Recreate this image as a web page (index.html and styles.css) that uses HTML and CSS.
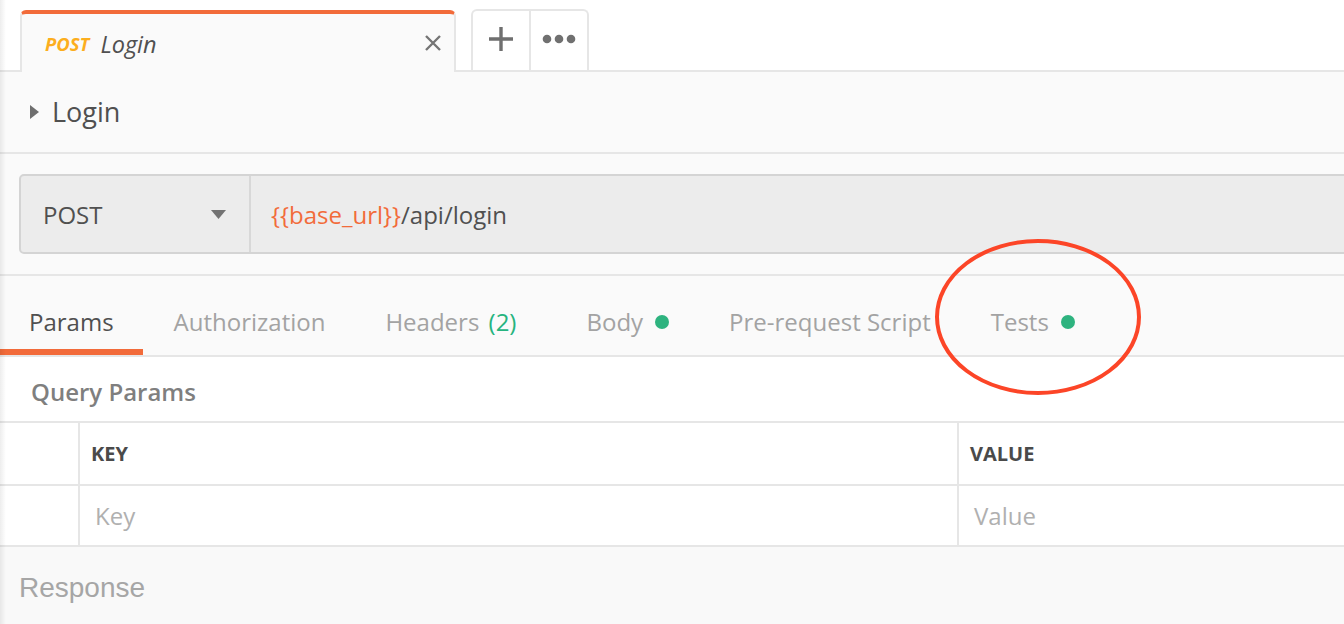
FILE: index.html
```html
<!DOCTYPE html>
<html>
<head>
<meta charset="utf-8">
<link rel="stylesheet" href="styles.css">
</head>
<body>
<div class="app">
  <div class="tabbar">
    <div class="tab active">
      <span class="tab-method">POST</span>
      <span class="tab-name">Login</span>
      <svg class="tab-close" width="18" height="18" viewBox="0 0 18 18"><path d="M2 2L16 16M16 2L2 16" stroke="#757575" stroke-width="2.4" fill="none"/></svg>
    </div>
    <div class="tab-actions">
      <div class="tab-btn"><svg width="26" height="26" viewBox="0 0 26 26"><path d="M13 1V25M1 13H25" stroke="#6f6f6f" stroke-width="3.4" fill="none"/></svg></div>
      <div class="tab-btn"><svg width="34" height="10" viewBox="0 0 34 10"><circle cx="5" cy="5" r="4.3" fill="#707070"/><circle cx="17" cy="5" r="4.3" fill="#707070"/><circle cx="29" cy="5" r="4.3" fill="#707070"/></svg></div>
    </div>
  </div>

  <div class="title-row">
    <svg class="caret-right" width="9" height="14" viewBox="0 0 9 14"><path d="M0 0L9 7L0 14Z" fill="#6e6e6e"/></svg>
    <span class="title">Login</span>
  </div>

  <div class="request-row">
    <div class="url-box">
      <div class="method">
        <span>POST</span>
        <svg width="15" height="9" viewBox="0 0 15 9"><path d="M0 0H15L7.5 9Z" fill="#737373"/></svg>
      </div>
      <div class="url"><span class="var">{{base_url}}</span>/api/login</div>
    </div>
  </div>

  <div class="req-tabs">
    <div class="req-tab selected">Params</div>
    <div class="req-tab">Authorization</div>
    <div class="req-tab">Headers <span class="count">(2)</span></div>
    <div class="req-tab">Body<span class="dot"></span></div>
    <div class="req-tab">Pre-request Script</div>
    <div class="req-tab">Tests<span class="dot"></span></div>
  </div>

  <div class="query-label">Query Params</div>

  <div class="kv-table">
    <div class="kv-row head">
      <div class="cell check"></div>
      <div class="cell key">KEY</div>
      <div class="cell value">VALUE</div>
    </div>
    <div class="kv-row">
      <div class="cell check"></div>
      <div class="cell key placeholder">Key</div>
      <div class="cell value placeholder">Value</div>
    </div>
  </div>

  <div class="response">Response</div>

  <svg class="annotation" width="220" height="170" viewBox="0 0 220 170"><ellipse cx="110" cy="85" rx="101" ry="76" fill="none" stroke="#fc4527" stroke-width="4"/></svg>
</div>
</body>
</html>
```

FILE: styles.css
```css
html, body {
  margin: 0;
  padding: 0;
  overflow: hidden;
}
body {
  font-family: "Open Sans", "Noto Sans", sans-serif;
  background: #fafafa;
  color: #505050;
}
.app {
  position: relative;
  width: 1344px;
  height: 624px;
  overflow: hidden;
}
.app::before {
  content: "";
  position: absolute;
  left: 0;
  top: 0;
  bottom: 0;
  width: 6px;
  background: linear-gradient(to right, rgba(0,0,0,0.07), rgba(0,0,0,0));
  z-index: 5;
  pointer-events: none;
}

/* Tab bar */
.tabbar {
  height: 70px;
  background: #fff;
  border-bottom: 2px solid #e6e6e6;
  display: flex;
  align-items: flex-end;
  padding-left: 20px;
}
.tab.active {
  box-sizing: border-box;
  width: 436px;
  height: 62px;
  margin-bottom: -2px;
  background: #fafafa;
  border-top: 4px solid #f26b3a;
  border-left: 2px solid #e6e6e6;
  border-right: 2px solid #e6e6e6;
  border-radius: 6px 6px 0 0;
  display: flex;
  align-items: center;
  padding: 0 12px 0 23px;
}
.tab-method {
  font-style: italic;
  font-weight: 700;
  font-size: 18.5px;
  color: #fcae1e;
  margin-right: 11px;
  margin-top: 1px;
}
.tab-name {
  font-style: italic;
  font-size: 23.5px;
  color: #505050;
  margin-top: 1px;
}
.tab-close {
  margin-left: auto;
  margin-top: 0;
}
.tab-actions {
  margin-left: 15px;
  height: 59px;
  display: flex;
  border: 2px solid #e6e6e6;
  border-bottom: none;
  border-radius: 6px 6px 0 0;
  background: #fff;
}
.tab-btn {
  width: 56px;
  display: flex;
  align-items: center;
  justify-content: center;
  padding-bottom: 3px;
}
.tab-btn + .tab-btn {
  border-left: 2px solid #e6e6e6;
}

/* Title */
.title-row {
  height: 80px;
  border-bottom: 2px solid #e6e6e6;
  display: flex;
  align-items: center;
  padding-left: 30px;
  gap: 13px;
}
.title {
  font-size: 27px;
  color: #505050;
  margin-top: -1px;
}

/* Request */
.request-row {
  height: 120px;
  border-bottom: 2px solid #e6e6e6;
  display: flex;
  align-items: center;
  padding-left: 19px;
}
.url-box {
  flex: 1;
  margin-right: -20px;
  height: 76px;
  background: #ececec;
  border: 2px solid #d4d4d4;
  border-radius: 5px;
  display: flex;
}
.method {
  width: 230px;
  box-sizing: border-box;
  border-right: 2px solid #d8d8d8;
  display: flex;
  align-items: center;
  justify-content: space-between;
  padding: 0 23px 0 22px;
  font-size: 24px;
  color: #505050;
}
.url {
  display: flex;
  align-items: center;
  padding-left: 20px;
  font-size: 24px;
  color: #505050;
}
.url .var {
  color: #f26b3a;
}

/* Request tabs */
.req-tabs {
  height: 79px;
  border-bottom: 2px solid #e6e6e6;
  display: flex;
  align-items: stretch;
}
.req-tab {
  display: flex;
  align-items: center;
  padding: 18px 29px 0 29px;
  margin-right: 2px;
  font-size: 24px;
  color: #a3a3a3;
  box-sizing: border-box;
  border-bottom: 6px solid transparent;
  white-space: pre;
}
.req-tab.selected {
  color: #505050;
  border-bottom-color: #f26b3a;
}
.req-tab .count {
  color: #26b47f;
  margin-left: 3px;
  margin-right: 10px;
}
.req-tab .dot {
  display: inline-block;
  width: 14px;
  height: 14px;
  border-radius: 50%;
  background: #2eb37f;
  margin-left: 12px;
}

/* Query params */
.query-label {
  height: 64px;
  background: #fff;
  display: flex;
  align-items: center;
  padding-left: 31px;
  padding-top: 4px;
  font-size: 24px;
  font-weight: 600;
  color: #7f7f7f;
  box-sizing: border-box;
}
.kv-table {
  background: #fff;
  border-top: 2px solid #e6e6e6;
}
.kv-row {
  display: flex;
  border-bottom: 2px solid #e6e6e6;
  height: 59px;
}
.kv-row.head {
  height: 61px;
}
.cell {
  display: flex;
  align-items: center;
  box-sizing: border-box;
}
.cell.check {
  width: 80px;
  border-right: 2px solid #e6e6e6;
}
.cell.key {
  width: 879px;
  border-right: 2px solid #e6e6e6;
  padding-left: 11px;
}
.cell.value {
  flex: 1;
  padding-left: 11px;
}
.head .cell {
  font-size: 20px;
  font-weight: 700;
  color: #4a4a4a;
}
.cell.placeholder {
  font-size: 24px;
  color: #b0b0b0;
  padding-left: 15px;
}

/* Response */
.response {
  height: 77px;
  background: #f9f9f9;
  display: flex;
  align-items: center;
  padding-left: 19px;
  padding-top: 5px;
  font-family: "Liberation Sans", Arial, sans-serif;
  font-size: 28px;
  color: #a6a6a6;
  box-sizing: border-box;
}

.annotation {
  position: absolute;
  left: 928px;
  top: 232px;
  z-index: 10;
}
```
